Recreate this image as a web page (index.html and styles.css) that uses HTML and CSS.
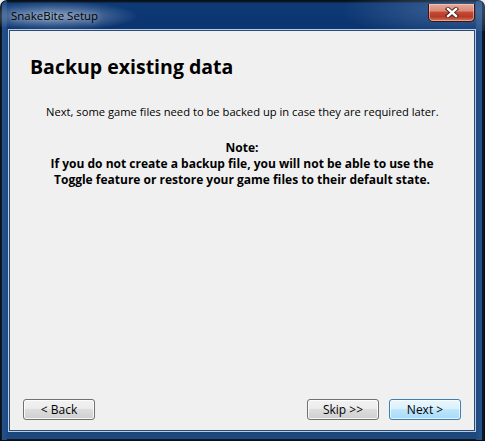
FILE: index.html
```html
<!DOCTYPE html>
<html>
<head>
<meta charset="utf-8">
<link rel="stylesheet" href="styles.css">
</head>
<body>
<div class="window">
  <div class="titlebar">
    <span class="title">SnakeBite Setup</span>
    <div class="close">
      <svg width="14" height="11" viewBox="0 0 14 11">
        <path d="M3 2 L11 9 M11 2 L3 9" stroke="#3a1a14" stroke-width="4.2" stroke-linecap="square" fill="none"/>
        <path d="M3 2 L11 9 M11 2 L3 9" stroke="#ffffff" stroke-width="2.4" stroke-linecap="square" fill="none"/>
      </svg>
    </div>
  </div>
  <div class="client">
    <h1 class="heading">Backup existing data</h1>
    <p class="intro">Next, some game files need to be backed up in case they are required later.</p>
    <div class="note">
      <div>Note:</div>
      <div>If you do not create a backup file, you will not be able to use the</div>
      <div>Toggle feature or restore your game files to their default state.</div>
    </div>
    <div class="grow"></div>
    <div class="buttons">
      <button class="btn">&lt; Back</button>
      <div class="grow"></div>
      <button class="btn">Skip &gt;&gt;</button>
      <button class="btn btn-default">Next &gt;</button>
    </div>
  </div>
</div>
</body>
</html>
```
FILE: styles.css
```css
html, body {
  margin: 0;
  padding: 0;
  background: #e9ecef;
}
body {
  width: 485px;
  height: 441px;
  overflow: hidden;
  font-family: "Open Sans", "Noto Sans", sans-serif;
}
.window {
  box-sizing: border-box;
  width: 485px;
  height: 441px;
  display: flex;
  flex-direction: column;
  padding: 0 11px 11px 10px;
  border-radius: 7px 7px 0 0;
  background:
    linear-gradient(to right, #0c1826 0, #0c1826 2px, #24528a 2px, #1f4a80 7px, transparent 7px),
    linear-gradient(to left, #0c1826 0, #0c1826 3px, #24528a 3px, #1f4a80 9px, transparent 9px),
    linear-gradient(to top, #0c1826 0, #0c1826 2px, #1e4a80 2px, #1c4679 9px, transparent 9px),
    linear-gradient(to bottom, #0c1826 0, #0c1826 2px, #0e3a76 3px, #0b3470 29px, #1d4a80 29px);
  box-shadow: inset 0 0 0 1px #0a0f18;
}
.titlebar {
  height: 31px;
  flex: none;
  display: flex;
  align-items: flex-start;
  margin: 0 -11px 0 -10px;
  padding: 0 10px 0 10px;
  border-radius: 7px 7px 0 0;
  background:
    radial-gradient(ellipse 85px 15px at 54px 16px, rgba(200,215,235,0.6), rgba(200,215,235,0) 100%),
    radial-gradient(ellipse 120px 30px at 460px 10px, rgba(120,150,190,0.45), rgba(120,150,190,0) 100%);
}
.title {
  margin-top: 8px;
  margin-left: 1px;
  font-size: 11.5px;
  line-height: 16px;
  color: #000;
  text-shadow: 0 0 7px rgba(255,255,255,0.8);
}
.close {
  margin-left: auto;
  margin-top: 4px;
  width: 47px;
  height: 18px;
  box-sizing: border-box;
  border: 1px solid #3b1510;
  border-top: none;
  border-radius: 0 0 5px 5px;
  background: linear-gradient(to bottom, #e8a898 0%, #d98a78 40%, #c24a36 50%, #b83a26 75%, #d07860 100%);
  box-shadow: inset 0 0 0 1px rgba(255,220,210,0.5);
  display: flex;
  align-items: center;
  justify-content: center;
}
.close svg { display: block; }
.client {
  flex: 1;
  display: flex;
  flex-direction: column;
  background: #f0f0f0;
  box-shadow: 0 0 0 1px #2a4a72, 0 0 0 2px #b6cbe4;
}
.heading {
  margin: 24px 0 0 20px;
  font-size: 19.5px;
  line-height: 24px;
  font-weight: 700;
  color: #000;
}
.intro {
  margin: 25px 0 0 36px;
  font-size: 11.2px;
  line-height: 16px;
  color: #000;
}
.note {
  margin-top: 20px;
  text-align: center;
  font-size: 12px;
  line-height: 16px;
  font-weight: 700;
  color: #000;
}
.grow { flex: 1; }
.buttons {
  display: flex;
  align-items: center;
  gap: 10px;
  padding: 0 13px 10px 13px;
}
.btn {
  box-sizing: border-box;
  width: 72px;
  height: 21px;
  padding: 0;
  font-family: "Open Sans", "Noto Sans", sans-serif;
  font-size: 12px;
  line-height: 16px;
  color: #000;
  border: 1px solid #707070;
  border-radius: 3px;
  background: linear-gradient(to bottom, #f2f2f2 0%, #ebebeb 50%, #dddddd 50%, #cfcfcf 100%);
  box-shadow: inset 0 0 0 1px rgba(255,255,255,0.8);
}
.btn-default {
  border-color: #3c7fb1;
  background: linear-gradient(to bottom, #eaf6fd 0%, #d9f0fc 50%, #bee6fd 50%, #a7d9f5 100%);
  box-shadow: inset 0 0 0 1px rgba(255,255,255,0.7);
}
```
